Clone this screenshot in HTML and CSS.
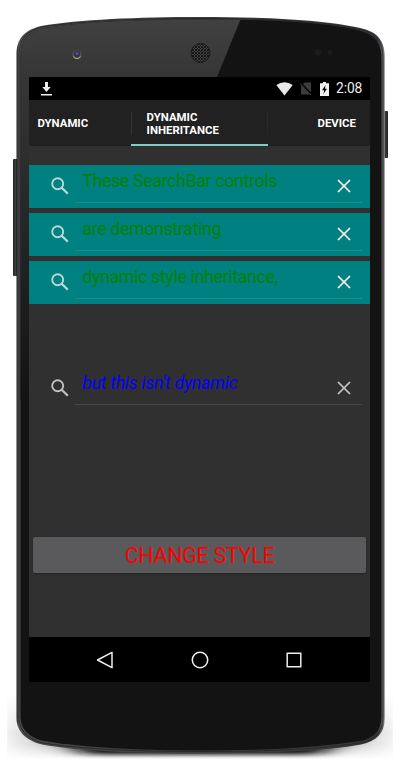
FILE: index.html
```html
<!DOCTYPE html>
<html lang="en">
<head>
<meta charset="utf-8">
<title>Dynamic Inheritance</title>
<link rel="stylesheet" href="styles.css">
</head>
<body>
<svg width="0" height="0" class="defs" aria-hidden="true">
  <symbol id="search" viewBox="0 0 18 18"><circle cx="6.700" cy="6.700" r="5.500" fill="none" stroke="currentColor" stroke-width="1.900"/><path d="M10.500 10.500L16.800 16.800" stroke="currentColor" stroke-width="2.300"/></symbol>
  <symbol id="close" viewBox="0 0 14 14"><path d="M1 1L13 13M13 1L1 13" stroke="currentColor" stroke-width="1.700"/></symbol>
</svg>
<div class="phone">
  <svg class="shell" viewBox="0 0 404 768" aria-hidden="true">
    <defs>
      <linearGradient id="gloss" x1="0" y1="0" x2="0" y2="1"><stop offset="0" stop-color="#414141"/><stop offset=".15" stop-color="#363636"/><stop offset="1" stop-color="#131313"/></linearGradient>
      <linearGradient id="rim" x1="0" x2="1"><stop offset="0" stop-color="#202124"/><stop offset=".006" stop-color="#505153"/><stop offset=".02" stop-color="#454648"/><stop offset=".98" stop-color="#35363a"/><stop offset=".994" stop-color="#636365"/><stop offset="1" stop-color="#929292"/></linearGradient>
      <linearGradient id="fade" x1="0" y1="0" x2="0" y2="1"><stop offset="0" stop-color="#888" stop-opacity="0"/><stop offset=".6" stop-color="#777" stop-opacity=".65"/><stop offset=".78" stop-color="#777" stop-opacity=".5"/><stop offset="1" stop-color="#888" stop-opacity="0"/></linearGradient>
      <linearGradient id="sides" x1="0" x2="1"><stop offset="0" stop-color="#fff" stop-opacity=".85"/><stop offset=".16" stop-color="#fff" stop-opacity="0"/><stop offset=".84" stop-color="#fff" stop-opacity="0"/><stop offset="1" stop-color="#fff" stop-opacity=".85"/></linearGradient>
      <linearGradient id="key" x1="0" x2="1"><stop offset="0" stop-color="#222"/><stop offset=".5" stop-color="#3c3c3c"/><stop offset="1" stop-color="#1b1b1b"/></linearGradient>
      <clipPath id="face"><path d="M20.500 56C20.500 40 28 32 43 28.500C80 22 130 19.500 201 19.500S325 22 361 31C375 35 381.500 43 381.500 59V716C381.500 731 374 738 360 741C322 747 270 750.500 201 750.500S81 747 44 741C30 738 20.500 730 20.500 716Z"/></clipPath>
      <pattern id="mesh" width="3" height="3" patternUnits="userSpaceOnUse"><rect width="3" height="3" fill="#171717"/><path d="M0 .5H2M2.500 1V3" stroke="#555" stroke-width=".7"/></pattern>
      <filter id="soft" x="-20%" y="-200%" width="140%" height="500%"><feGaussianBlur stdDeviation="14 2"/></filter>
    </defs>
    <rect x="7" y="694" width="386" height="65" fill="url(#fade)"/>
    <rect x="7" y="694" width="386" height="66" fill="url(#sides)"/>
    <path d="M60 738H344L320 754.500H84Z" fill="#111" filter="url(#soft)"/>
    <rect x="13" y="159" width="5" height="117" rx="1" fill="url(#key)"/>
    <rect x="384" y="111" width="4" height="47" rx="1" fill="url(#key)"/>
    <path d="M16.500 54C16.500 38 25 30 41 26C80 19.500 135 17 201 17S330 20 364 29C378 33 384.800 41 384.800 58V718C384.800 733 377 741 361 744.500C323 751 270 753.500 201 753.500S80 751 42 744.500C27 741 16.500 732 16.500 718Z" fill="url(#rim)"/>
    <path d="M19 55C19 39 27 31 42 27C80 21 133 18.500 201 18.500S326 21 362 30C376 34 383 42 383 58V717C383 732 375 740 360 743C322 749 270 751.500 201 751.500S81 749 43 743C29 740 19 731 19 717Z" fill="none" stroke="#242426" stroke-width=".8"/>
    <g clip-path="url(#face)">
      <rect x="16" y="16" width="370" height="740" fill="#131313"/>
      <path d="M16 16H242L217 77L80 400H16Z" fill="url(#gloss)"/>
    </g>
    <circle cx="77" cy="54.500" r="4.500" fill="#5c5c60"/><path d="M73.500 56.500Q77 61 80.500 56.500" fill="none" stroke="#aaa" stroke-width="1.200"/><circle cx="77" cy="54" r="3.400" fill="#34333f"/><circle cx="77" cy="53.500" r="1.700" fill="#4e4b9b"/>
    <circle cx="200.500" cy="53" r="9.500" fill="url(#mesh)" stroke="#1b1b1b"/>
    <circle cx="318" cy="52.500" r="3.500" fill="#1b1b1b"/><circle cx="330" cy="52.500" r="2.500" fill="#1a1a1a"/>
  </svg>

  <main class="screen">
    <header class="status">
      <svg class="download" width="11" height="14" viewBox="0 0 11 14"><path d="M4 0H7V5H9.700L5.500 10L1.300 5H4ZM0 12H11V13.500H0Z" fill="#eee"/></svg>
      <svg class="wifi" width="17" height="14" viewBox="0 0 17 14"><path d="M8.500 13.500L.3 3Q8.500-2.400 16.700 3Z" fill="#e9e9e9"/></svg>
      <svg class="nosim" width="12" height="13" viewBox="0 0 12 13"><path d="M4.500 .5H11V12.500H1V4Z" fill="#3c3c3c"/><path d="M0 .5L11.500 12.500" stroke="#000" stroke-width="2.200"/><path d="M0 1.500L11 13" stroke="#444" stroke-width="1"/></svg>
      <svg class="battery" width="9" height="14" viewBox="0 0 9 14"><path d="M3 0H6V1.300H9V14H0V1.300H3Z" fill="#f0f0f0"/><path d="M5.600 3L2 8.200H4.200L3.400 12L7 6.700H4.900Z" fill="#000"/></svg>
      <span class="clock">2:08</span>
    </header>
    <nav class="tabs">
      <a class="tab first">DYNAMIC</a>
      <a class="tab active">DYNAMIC<br>INHERITANCE</a>
      <a class="tab last">DEVICE</a>
    </nav>
    <section class="content">
      <div class="bar"><svg class="search"><use href="#search"/></svg><div class="field">These SearchBar controls</div><svg class="close"><use href="#close"/></svg></div>
      <div class="bar"><svg class="search"><use href="#search"/></svg><div class="field">are demonstrating</div><svg class="close"><use href="#close"/></svg></div>
      <div class="bar"><svg class="search"><use href="#search"/></svg><div class="field">dynamic style inheritance,</div><svg class="close"><use href="#close"/></svg></div>
      <div class="bar plain"><svg class="search"><use href="#search"/></svg><div class="field">but this isn't dynamic</div><svg class="close"><use href="#close"/></svg></div>
      <button class="change">CHANGE STYLE</button>
    </section>
    <footer class="nav">
      <svg width="18" height="18" viewBox="0 0 18 18"><path d="M1.500 9L16 1.300V16.700Z"/></svg>
      <svg width="18" height="18" viewBox="0 0 18 18"><circle cx="9" cy="9" r="7.700"/></svg>
      <svg width="18" height="18" viewBox="0 0 18 18"><rect x="2.200" y="2.200" width="13.600" height="13.600"/></svg>
    </footer>
  </main>
</div>
</body>
</html>
```
FILE: styles.css
```css
* { box-sizing: border-box; }
body { margin: 0; background: #fff; font-family: Roboto, "Liberation Sans", sans-serif; }
svg { display: block; flex: none; }
.defs { position: absolute; }
.phone { position: relative; width: 404px; height: 768px; padding: 77px 34px 0 29.4px; overflow: hidden; }
.shell { position: absolute; inset: 0; width: 404px; height: 768px; }
.screen { position: relative; width: 340.6px; height: 605px; display: flex; flex-direction: column; background: #303030; }
.status { height: 23px; background: #000; display: flex; align-items: center; padding: 0 8px 0 11.6px; color: #eee; }
.wifi { margin-left: auto; margin-right: 7px; }
.nosim { margin-right: 8px; }
.battery { margin-right: 6.500px; }
.clock { font-size: 13.800px; line-height: 23px; width: 26px; white-space: nowrap; letter-spacing: -.1px; }
.tabs { height: 46px; display: grid; grid-template-columns: 102px 136.600px 102px; background: #212121; color: #fff; font-size: 11.400px; font-weight: 700; line-height: 13px; }
.tab { display: flex; align-items: center; padding: 1px 8px 0; }
.active { padding: 3px 0 0 15.200px; border-bottom: 2px solid #80cbc4; background: linear-gradient(#333, #333) 0 12px / 1px 23px no-repeat, linear-gradient(#292929, #292929) 100% 12px / 1px 23px no-repeat; }
.last { justify-content: flex-end; padding-right: 14px; }
.content { flex: 1; padding-top: 19px; }
.bar { display: flex; height: 42.500px; margin-bottom: 5.700px; padding: 0 8px 0 21.600px; background: #008080; position: relative; color: #b6d9d9; }
.search { width: 18px; height: 18px; margin: 12px 6px 0 0; }
.field { flex: 1; height: 38px; padding: 5px 0 0 7.300px; border-bottom: 1px solid #1d8c8c; color: #008000; font-size: 17.600px; letter-spacing: -.26px; line-height: 22px; white-space: nowrap; }
.close { position: absolute; right: 19.400px; top: 13.500px; width: 14px; height: 14px; color: #fff; }
.plain { margin-top: 63.400px; background: none; color: #c1c1c1; }
.plain .field { color: #00f; font-style: italic; border-color: #464646; font-size: 17.600px; letter-spacing: -.22px; }
.plain .close { color: #c8c8c8; }
.change { display: block; width: 333px; height: 36px; margin: 127.300px 0 0 3.600px; padding: 2px 0 0; border: 0; border-radius: 2px; background: #5a5a5c; box-shadow: 0 1px 2px #222; color: #f00; font: 21.500px/34px Roboto, sans-serif; letter-spacing: -.33px; }
.nav { height: 45px; background: #000; display: flex; justify-content: space-between; align-items: center; padding: 0 67px; }
.nav svg { fill: none; stroke: #eee; stroke-width: 1.500; stroke-linejoin: round; }
```
